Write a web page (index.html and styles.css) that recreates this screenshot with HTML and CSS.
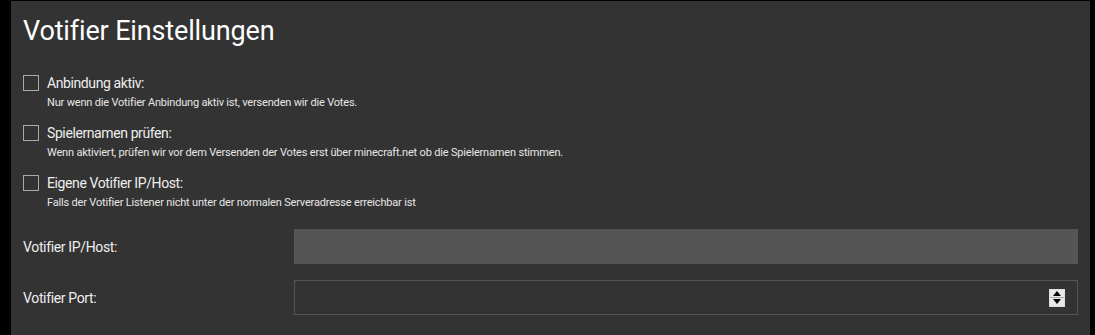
FILE: index.html
```html
<!DOCTYPE html>
<html lang="de">
<head>
<meta charset="utf-8">
<title>Votifier Einstellungen</title>
<link rel="stylesheet" href="styles.css">
</head>
<body>
<div class="panel">
  <h1 class="title">Votifier Einstellungen</h1>
  <div class="checks">
    <div class="check-group">
      <label class="check-line"><span class="box"></span><span class="check-label">Anbindung aktiv:</span></label>
      <p class="desc">Nur wenn die Votifier Anbindung aktiv ist, versenden wir die Votes.</p>
    </div>
    <div class="check-group">
      <label class="check-line"><span class="box"></span><span class="check-label">Spielernamen prüfen:</span></label>
      <p class="desc">Wenn aktiviert, prüfen wir vor dem Versenden der Votes erst über minecraft.net ob die Spielernamen stimmen.</p>
    </div>
    <div class="check-group">
      <label class="check-line"><span class="box"></span><span class="check-label">Eigene Votifier IP/Host:</span></label>
      <p class="desc">Falls der Votifier Listener nicht unter der normalen Serveradresse erreichbar ist</p>
    </div>
  </div>
  <div class="fields">
    <div class="field-row">
      <span class="field-label">Votifier IP/Host:</span>
      <div class="input input-disabled"></div>
    </div>
    <div class="field-row">
      <span class="field-label">Votifier Port:</span>
      <div class="input input-number">
        <span class="spinner">
          <span class="spin-btn"><svg width="8" height="5" viewBox="0 0 8 5"><path d="M0 5 L4 0 L8 5 Z" fill="#000"/></svg></span>
          <span class="spin-btn spin-down"><svg width="8" height="5" viewBox="0 0 8 5"><path d="M0 0 L4 5 L8 0 Z" fill="#000"/></svg></span>
        </span>
      </div>
    </div>
  </div>
</div>
</body>
</html>
```
FILE: styles.css
```css
html, body {
  margin: 0;
  padding: 0;
  background: #000;
  height: 100%;
}
body {
  font-family: Roboto, "Noto Sans", sans-serif;
  color: #eee;
}
.panel {
  margin: 1px 5px 0 11px;
  background: #333;
  padding: 10px 12px 20px 12px;
  min-height: 334px;
  box-sizing: border-box;
}
.title {
  margin: 0 0 21px 0;
  font-weight: 400;
  font-size: 27px;
  letter-spacing: -0.15px;
  line-height: 40px;
  color: #fff;
}
.checks {
  display: flex;
  flex-direction: column;
  gap: 10px;
}
.check-group {
  display: flex;
  flex-direction: column;
  gap: 1px;
}
.check-line {
  display: flex;
  align-items: center;
  gap: 8px;
  height: 21px;
}
.box {
  width: 14px;
  height: 14px;
  border: 1px solid #aaa;
  flex: none;
}
.check-label {
  font-size: 14px;
  letter-spacing: -0.4px;
  color: #eee;
}
.desc {
  margin: 0 0 0 24px;
  font-size: 11px;
  letter-spacing: -0.18px;
  line-height: 18px;
  color: #e6e6e6;
}
.fields {
  margin-top: 17px;
  display: flex;
  flex-direction: column;
  gap: 16px;
}
.field-row {
  display: grid;
  grid-template-columns: 271px 1fr;
  align-items: center;
}
.field-label {
  font-size: 14px;
  letter-spacing: -0.35px;
  color: #eee;
}
.input {
  height: 35px;
  box-sizing: border-box;
}
.input-disabled {
  background: #555;
}
.input-number {
  border: 1px solid #555;
  display: flex;
  justify-content: flex-end;
  align-items: center;
  padding-right: 12px;
}
.spinner {
  display: flex;
  flex-direction: column;
  width: 16px;
  height: 18px;
  box-sizing: border-box;
  border: 1px solid #ddd;
  background: #aaa;
  gap: 1px;
}
.spin-btn {
  flex: 1;
  background: #e8e8e8;
  display: flex;
  align-items: center;
  justify-content: center;
}
```
